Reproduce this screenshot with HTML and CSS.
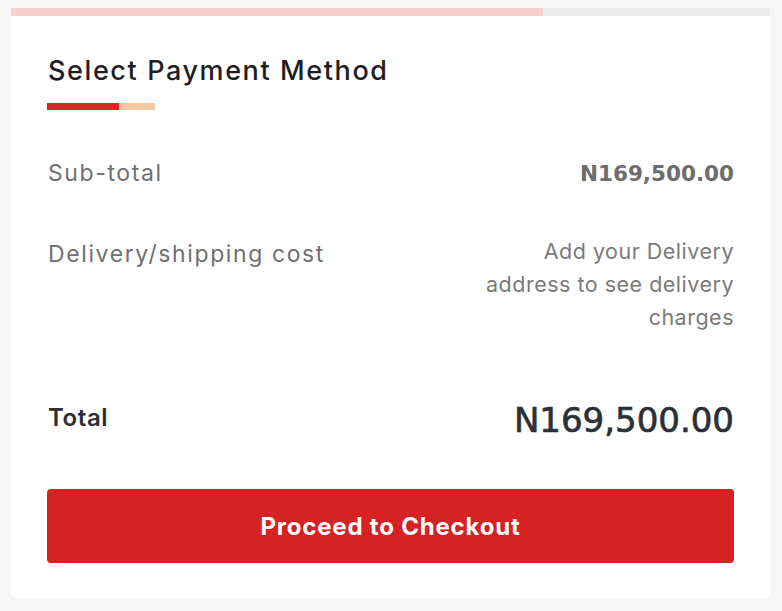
FILE: index.html
```html
<!DOCTYPE html>
<html lang="en">
<head>
    <meta charset="UTF-8">
    <meta name="viewport" content="width=device-width, initial-scale=1.0">
    <title>Select Payment Method</title>
    <link rel="stylesheet" href="styles.css">
</head>
<body>
    <div class="card">
        <div class="progress">
            <div class="progress-fill"></div>
        </div>
        <div class="card-body">
            <h2 class="title">Select Payment Method</h2>
            <div class="title-bar">
                <span class="bar-red"></span>
                <span class="bar-peach"></span>
            </div>

            <div class="row row-subtotal">
                <span class="label">Sub-total</span>
                <span class="amount">N169,500.00</span>
            </div>

            <div class="row row-delivery">
                <span class="label">Delivery/shipping cost</span>
                <span class="note">Add your Delivery address to see delivery charges</span>
            </div>

            <div class="row row-total">
                <span class="total-label">Total</span>
                <span class="total-amount">N169,500.00</span>
            </div>

            <button class="checkout">Proceed to Checkout</button>
        </div>
    </div>
</body>
</html>
```

FILE: styles.css
```css
* {
    box-sizing: border-box;
    margin: 0;
    padding: 0;
}

body {
    font-family: 'Inter', 'Noto Sans', sans-serif;
    background-color: #f6f6f6;
    color: #1e1e24;
    padding: 8px 12px 0 11px;
}

.card {
    width: 759px;
    background-color: #fff;
    border-radius: 0 0 5px 5px;
}

.progress {
    height: 8px;
    background-color: #ebebeb;
}

.progress-fill {
    width: 532px;
    height: 100%;
    background-color: #f7cdcd;
}

.card-body {
    padding: 38px 36px 35px;
}

.title {
    font-size: 27px;
    line-height: 34px;
    font-weight: 500;
    letter-spacing: 1.6px;
    color: #1e1e24;
    padding-left: 1px;
}

.title-bar {
    display: flex;
    margin-top: 15px;
    height: 7px;
}

.bar-red {
    width: 72px;
    background-color: #db2525;
}

.bar-peach {
    width: 36px;
    background-color: #f2c9a0;
}

.row {
    display: flex;
    justify-content: space-between;
}

.label {
    font-size: 23px;
    line-height: 33px;
    letter-spacing: 1.6px;
    color: #707070;
    padding-left: 1px;
}

.amount {
    font-family: 'DejaVu Sans', sans-serif;
    font-size: 21.5px;
    font-weight: 700;
    color: #6d6d6d;
}

.row-subtotal {
    margin-top: 47px;
    align-items: center;
}

.row-delivery {
    margin-top: 45px;
    align-items: flex-start;
}

.row-delivery .label {
    padding-top: 3px;
}

.note {
    width: 270px;
    text-align: right;
    font-size: 21.5px;
    line-height: 33px;
    letter-spacing: 0.5px;
    color: #7a7a7a;
}

.row-total {
    margin-top: 66px;
    align-items: flex-start;
}

.total-label {
    font-size: 24px;
    line-height: 34px;
    font-weight: 600;
    letter-spacing: 0.6px;
    color: #2b2f36;
    padding: 1px 0 0 1px;
}

.total-amount {
    font-family: 'DejaVu Sans', sans-serif;
    font-size: 34px;
    line-height: 40px;
    font-weight: 400;
    -webkit-text-stroke: 0.7px #2b3038;
    color: #2b3038;
}

.checkout {
    display: block;
    width: 100%;
    height: 74px;
    margin-top: 49px;
    border: none;
    border-radius: 4px;
    background-color: #d62222;
    color: #fff;
    font-family: 'Inter', sans-serif;
    font-size: 24px;
    font-weight: 700;
    letter-spacing: 0.8px;
    cursor: pointer;
}
```
